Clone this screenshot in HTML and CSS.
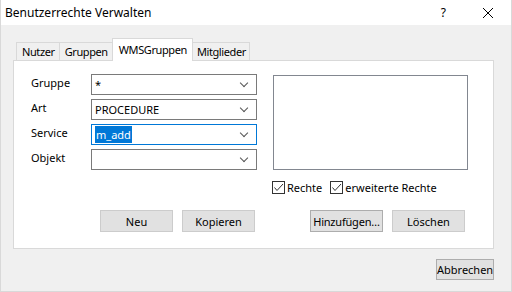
FILE: index.html
```html
<!DOCTYPE html>
<html lang="de">
<head>
    <meta charset="UTF-8">
    <title>Benutzerrechte Verwalten</title>
    <link rel="stylesheet" href="styles.css">
</head>
<body>
    <div class="window">
        <div class="titlebar">
            <span class="title">Benutzerrechte Verwalten</span>
            <span class="help">?</span>
            <svg class="close" width="12" height="12" viewBox="0 0 12 12">
                <path d="M1 1 L11 11 M11 1 L1 11" stroke="#000" stroke-width="1" fill="none"/>
            </svg>
        </div>

        <div class="content">
            <div class="tabs">
                <div class="tab">Nutzer</div>
                <div class="tab">Gruppen</div>
                <div class="tab active">WMSGruppen</div>
                <div class="tab">Mitglieder</div>
            </div>

            <div class="panel">
                <div class="top">
                    <div class="form">
                        <div class="row">
                            <label>Gruppe</label>
                            <div class="combo"><span>*</span><i class="arrow"></i></div>
                        </div>
                        <div class="row">
                            <label>Art</label>
                            <div class="combo"><span>PROCEDURE</span><i class="arrow"></i></div>
                        </div>
                        <div class="row">
                            <label>Service</label>
                            <div class="combo focused"><span class="selected">m_add</span><i class="arrow"></i></div>
                        </div>
                        <div class="row">
                            <label>Objekt</label>
                            <div class="combo"><span></span><i class="arrow"></i></div>
                        </div>
                    </div>

                    <div class="side">
                        <div class="listbox"></div>
                        <div class="checks">
                            <label class="check"><span class="box">
                                <svg width="11" height="11" viewBox="0 0 11 11"><path d="M1.5 5.5 L4 8.5 L10 2" stroke="#333" stroke-width="1" fill="none"/></svg>
                            </span>Rechte</label>
                            <label class="check"><span class="box">
                                <svg width="11" height="11" viewBox="0 0 11 11"><path d="M1.5 5.5 L4 8.5 L10 2" stroke="#333" stroke-width="1" fill="none"/></svg>
                            </span>erweiterte Rechte</label>
                        </div>
                    </div>
                </div>

                <div class="buttons">
                    <div class="group">
                        <button class="btn light">Neu</button>
                        <button class="btn light">Kopieren</button>
                    </div>
                    <div class="group">
                        <button class="btn tight">Hinzufügen…</button>
                        <button class="btn light">Löschen</button>
                    </div>
                </div>
            </div>

            <div class="footer">
                <button class="btn cancel">Abbrechen</button>
            </div>
        </div>
    </div>
</body>
</html>
```

FILE: styles.css
```css
body {
    margin: 0;
    font-family: 'Noto Sans', 'Open Sans', sans-serif;
    font-size: 11px;
    color: #000;
    background: #f0f0f0;
}

.window {
    width: 512px;
    height: 292px;
    box-sizing: border-box;
    border: 1px solid #d9d9d9;
    border-top: none;
    background: #f0f0f0;
    overflow: hidden;
}

.titlebar {
    height: 25px;
    background: #fff;
    display: flex;
    align-items: center;
    padding-left: 4px;
}

.title {
    font-size: 12px;
    flex: 1;
}

.help {
    font-size: 12px;
    margin-right: 36px;
}

.close {
    margin-right: 17px;
}

.content {
    padding: 12px 0 0 12px;
}

.tabs {
    display: flex;
    align-items: flex-end;
    height: 23px;
    padding-left: 3px;
}

.tab {
    height: 18px;
    line-height: 17px;
    box-sizing: border-box;
    border: 1px solid #d9d9d9;
    border-bottom: none;
    border-right: none;
    padding: 0 4px 0 5px;
    letter-spacing: -0.4px;
    background: #f0f0f0;
}

.tab:nth-child(4) {
    border-right: 1px solid #d9d9d9;
    padding: 0 3px 0 4px;
}

.tab.active {
    height: 23px;
    line-height: 21px;
    background: #fff;
    border-right: 1px solid #d9d9d9;
    padding: 0 5px 0 6px;
    margin-bottom: -1px;
    position: relative;
    z-index: 1;
}

.tab.active + .tab {
    border-left: none;
}

.panel {
    width: 481px;
    height: 189px;
    box-sizing: border-box;
    border: 1px solid #d9d9d9;
    background: #fff;
    padding: 13px 0 0 17px;
}

.top {
    display: flex;
}

.form {
    display: flex;
    flex-direction: column;
    gap: 4px;
}

.row {
    display: flex;
    align-items: center;
}

.row label {
    width: 60px;
    margin-top: -4px;
}

.combo {
    width: 166px;
    height: 21px;
    box-sizing: border-box;
    border: 1px solid #7a7a7a;
    display: flex;
    align-items: center;
    padding-left: 3px;
}

.combo span {
    flex: 1;
}

.combo.focused {
    border-color: #0078d7;
}

.combo .selected {
    flex: none;
    background: #0078d7;
    color: #fff;
    padding: 1px;
}

.arrow {
    width: 5px;
    height: 5px;
    border-right: 1px solid #555;
    border-bottom: 1px solid #555;
    transform: rotate(45deg);
    margin: -4px 9px 0 0;
}

.combo.focused .arrow {
    margin-left: auto;
}

.side {
    margin-left: 16px;
    margin-top: 1px;
}

.listbox {
    width: 195px;
    height: 95px;
    box-sizing: border-box;
    border: 1px solid #828790;
}

.checks {
    display: flex;
    gap: 4px;
    margin-top: 10px;
}

.check {
    display: flex;
    align-items: center;
    gap: 2px;
    margin-left: -1px;
}

.check + .check {
    margin-left: 4px;
}

.box {
    width: 13px;
    height: 13px;
    box-sizing: border-box;
    border: 1px solid #333;
    background: #fff;
    display: flex;
    align-items: center;
    justify-content: center;
}

.buttons {
    display: flex;
    gap: 55px;
    margin: 15px 0 0 69px;
}

.group {
    display: flex;
    gap: 9px;
}

.btn {
    width: 73px;
    height: 22px;
    font-family: inherit;
    font-size: 11px;
    background: #e1e1e1;
    border: 1px solid #adadad;
    padding: 0;
    color: #000;
}

.btn.light {
    border-color: #cccccc;
}

.btn.tight {
    letter-spacing: -0.2px;
}

.footer {
    display: flex;
    justify-content: flex-end;
    padding: 10px 17px 0 0;
}

.btn.cancel {
    width: 58px;
    height: 21px;
}
```
